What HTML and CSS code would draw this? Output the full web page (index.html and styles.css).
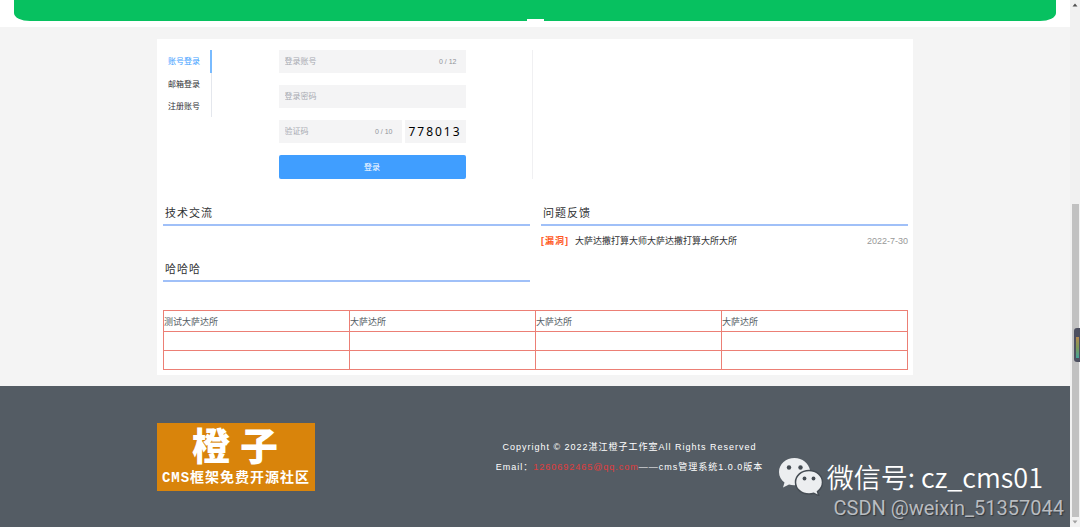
FILE: index.html
```html
<!DOCTYPE html>
<html lang="zh-CN">
<head>
<meta charset="utf-8">
<meta name="viewport" content="width=device-width, initial-scale=1">
<title>橙子 CMS框架免费开源社区</title>
<link rel="stylesheet" href="styles.css">
</head>
<body>
<div class="page">
  <header class="hero"><div class="banner"><span class="indicator"></span></div></header>
  <main class="card">
    <section class="login">
      <div class="login-left">
        <nav class="tabs">
          <button class="tab active" type="button">账号登录</button>
          <button class="tab" type="button">邮箱登录</button>
          <button class="tab" type="button">注册账号</button>
        </nav>
        <form class="form">
          <label class="field"><input type="text" placeholder="登录账号" aria-label="登录账号"><span class="count">0 / 12</span></label>
          <label class="field"><input type="password" placeholder="登录密码" aria-label="登录密码"></label>
          <div class="code-row">
            <label class="field"><input type="text" placeholder="验证码" aria-label="验证码"><span class="count">0 / 10</span></label>
            <span class="captcha">778013</span>
          </div>
          <button class="submit" type="button">登录</button>
        </form>
      </div>
    </section>
    <div class="boards">
      <section class="board"><h2>技术交流</h2></section>
      <section class="board">
        <h2>问题反馈</h2>
        <p class="post"><span class="tag">[漏洞]</span><a href="#">大萨达撒打算大师大萨达撒打算大所大所</a><time>2022-7-30</time></p>
      </section>
      <section class="board"><h2>哈哈哈</h2></section>
    </div>
    <table class="links">
      <tr><td>测试大萨达所</td><td>大萨达所</td><td>大萨达所</td><td>大萨达所</td></tr>
      <tr><td></td><td></td><td></td><td></td></tr>
      <tr><td></td><td></td><td></td><td></td></tr>
    </table>
  </main>
  <footer class="footer">
    <div class="footer-inner">
      <div class="logo"><span class="logo-name">橙子</span><span class="logo-sub">CMS框架免费开源社区</span></div>
      <div class="legal">
        <p>Copyright © 2022湛江橙子工作室All Rights Reserved</p>
        <p>Email：<a href="#">1260692465@qq.com</a>——cms管理系统1.0.0版本</p>
      </div>
    </div>
  </footer>
</div>
<div class="scrollbar">
  <svg class="arrow" viewBox="0 0 10 10"><path d="M5 3.5 7.5 6.5H2.5Z" fill="#505050"/></svg>
  <div class="space"></div>
  <div class="thumb"></div>
  <svg class="arrow" viewBox="0 0 10 10"><path d="M2.5 3.5H7.5L5 6.5Z" fill="#a0a0a0"/></svg>
</div>
<div class="meter"><span></span></div>
<div class="watermark">
  <div class="wechat">
    <svg viewBox="0 0 44 38">
      <path fill="#eceef0" d="M15.500 0C7 0 0 6 0 14c0 4.500 2.200 8 5.500 10.500L4 29.500l6-3c2 .6 4 .8 6 .7L31 12C29.500 5 23.500 0 15.500 0Z"/>
      <path fill="#eceef0" stroke="#454c53" stroke-width="1.500" d="M30 12.500c-7.500 0-13.500 5-13.500 11.700S22.500 36 30 36c1.700 0 3.300-.3 4.800-.8l5 2.600-1.300-4.300c3-2.200 5-5.500 5-9.300 0-6.700-6-11.700-13.500-11.700Z"/>
      <g fill="#454c53"><circle cx="10" cy="9.500" r="2.200"/><circle cx="21.500" cy="9.500" r="2.200"/><circle cx="25.500" cy="20.500" r="1.900"/><circle cx="34.500" cy="20.500" r="1.900"/></g>
    </svg>
    <span>微信号: cz_cms01</span>
  </div>
  <div class="csdn">CSDN @weixin_51357044</div>
</div>
</body>
</html>
```

FILE: styles.css
```css
* { box-sizing: border-box; }
body {
  margin: 0;
  min-height: 100vh;
  display: flex;
  position: relative;
  background: #f4f4f4;
  font-family: "Liberation Sans", "Noto Sans CJK SC", sans-serif;
  font-size: 9px;
  color: #303133;
}
h2, p { margin: 0; }
a { color: inherit; text-decoration: none; }
button, input { font: inherit; color: inherit; border: 0; margin: 0; }

.page { flex: 1; min-width: 0; display: flex; flex-direction: column; }
.hero { background: #fff; padding: 0 14px 6px; margin-bottom: 12px; }
.banner {
  height: 21px;
  display: flex;
  justify-content: center;
  align-items: flex-end;
  background: #07c160;
  border-radius: 0 0 16px 16px / 0 0 8px 8px;
}
.indicator { width: 17px; height: 2px; background: #fff; }

.card { width: 70vw; margin: 0 auto 11px; padding: 11px 5px 5px 6px; background: #fff; }
.login { display: grid; grid-template-columns: 1fr 1fr; padding: 0 10px 0 5px; }
.login-left { display: flex; border-right: 1px solid #f0f0f2; }
.tabs {
  align-self: flex-start;
  display: flex;
  flex-direction: column;
  border-right: 1px solid #e4e7ed;
}
.tab {
  height: 23px;
  padding: 0 10px 2px 0;
  margin-right: -1px;
  background: none;
  font-size: 8px;
  border-right: 2px solid transparent;
}
.tab + .tab { height: 22px; }
.tab.active { color: #409eff; border-color: #79bbff; }
.form {
  width: 58%;
  max-width: 187px;
  margin: 0 auto;
  display: flex;
  flex-direction: column;
  gap: 12px;
  font-size: 8px;
}
.field {
  flex: 1;
  min-width: 0;
  display: flex;
  align-items: center;
  padding: 0 9px 0 6px;
  background: #f4f4f5;
}
.field input { flex: 1; min-width: 0; height: 23px; padding: 0; background: none; outline: 0; }
.field input::placeholder { color: #a8abb2; opacity: 1; }
.count { color: #909399; font-size: 7px; }
.code-row { display: flex; gap: 3px; }
.captcha {
  width: 61px;
  background: #f4f4f5;
  color: #000;
  font: 12px/23px "Noto Sans", sans-serif;
  letter-spacing: 2px;
  text-align: center;
  white-space: nowrap;
}
.submit { height: 24px; padding: 0 0 2px; border-radius: 2px; background: #409eff; color: #fff; }

.boards { display: grid; grid-template-columns: 1fr 1fr; column-gap: 11px; margin-top: 23px; }
.board { height: 56px; }
.board h2 {
  padding: 0 2px;
  font-size: 11px;
  line-height: 22px;
  font-weight: 400;
  letter-spacing: 1px;
  border-bottom: 2px solid #a0c0f8;
}
.post { display: flex; line-height: 16px; margin-top: 7px; }
.tag { color: #ff5722; font-weight: 700; letter-spacing: 1px; margin-right: 6px; }
.post a { flex: 1; }
.post time { color: #999; }

.links { width: 100%; margin-top: -4px; border-collapse: collapse; table-layout: fixed; border: 1px solid #ec7f75; }
.links td { height: 19px; padding: 0; border: 1px solid #ec7f75; color: #545c64; }
.links tr:first-child td { height: 21px; }

.footer { flex: 1; background: #545c64; padding: 37px 0; }
.footer-inner { width: 70vw; margin: 0 auto; display: grid; grid-template-columns: 1fr 3fr; }
.logo {
  width: 158px;
  height: 68px;
  display: flex;
  flex-direction: column;
  align-items: center;
  background: #d9840b;
  color: #fff;
  font-family: "Liberation Mono", "Noto Sans CJK SC", monospace;
  font-weight: 700;
}
.logo-name { font: 900 38px/42px "Noto Sans CJK SC", sans-serif; letter-spacing: 10px; padding-left: 8px; }
.logo-sub { font-size: 14px; line-height: 26px; letter-spacing: 1px; white-space: nowrap; }
.legal { padding-top: 14px; text-align: center; color: #fff; line-height: 20px; letter-spacing: 1px; }
.legal a { color: #e03c3c; }

.scrollbar { width: 10px; height: 100vh; display: flex; flex-direction: column; background: #f1f1f1; }
.arrow { width: 10px; height: 10px; }
.space { flex: 194; }
.thumb { flex: 313; margin: 0 1px 0 2px; background: #c1c1c1; }
.meter {
  position: absolute;
  top: 328px;
  right: 0;
  width: 6px;
  height: 34px;
  padding: 9px 1px 4px 2px;
  background: #4d5060;
  border-radius: 3px 0 0 3px;
}
.meter span { display: block; height: 100%; background: linear-gradient(#b58a50, #7f9a58, #45a29a); }

.watermark { position: absolute; right: 16px; bottom: 8px; }
.wechat {
  display: flex;
  align-items: center;
  justify-content: flex-end;
  gap: 4px;
  margin-right: 21px;
  color: #fff;
  font: 27px/36px "Noto Sans CJK SC", sans-serif;
  font-weight: 350;
  white-space: nowrap;
}
.wechat svg { width: 44px; height: 38px; }
.csdn {
  color: #b9bcc0;
  font-family: Roboto, "Liberation Sans", sans-serif;
  font-size: 20px;
  line-height: 24px;
  text-align: right;
  text-shadow: 1px 1px 1px #33383d;
}
```
